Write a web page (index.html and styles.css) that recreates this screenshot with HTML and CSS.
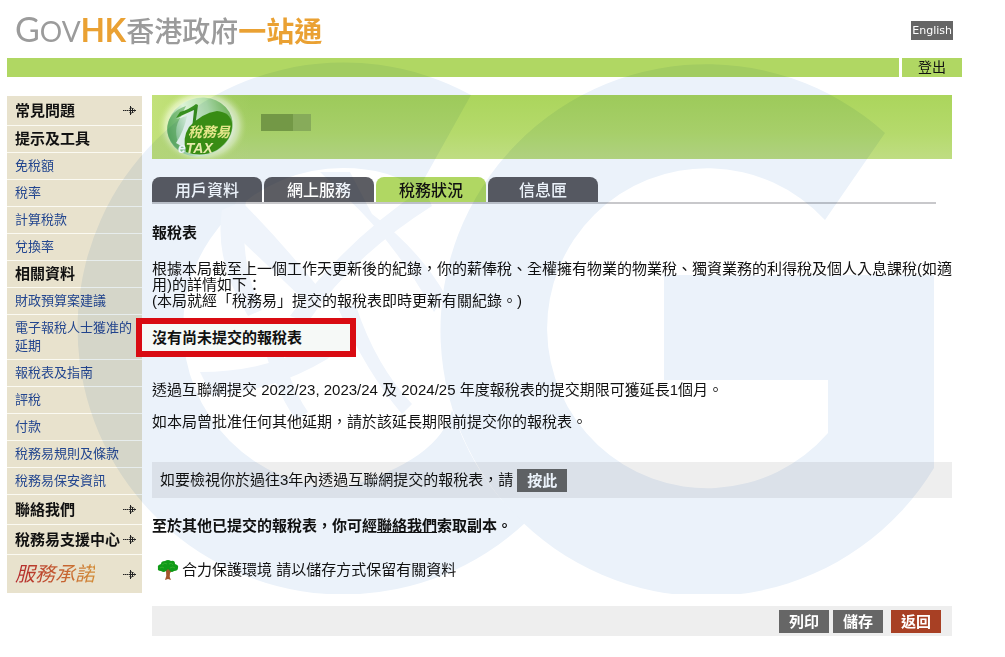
FILE: index.html
```html
<!DOCTYPE html>
<html lang="zh-HK">
<head>
<meta charset="utf-8">
<title>稅務易</title>
<meta name="viewport" content="width=device-width, initial-scale=1">
<link rel="stylesheet" href="styles.css">
</head>
<body>
<svg class="defs" aria-hidden="true">
  <symbol id="arrow" viewBox="0 0 13 11">
    <path d="M0 5h1v1h-1zM2 5h1v1h-1zM4 5h1v1h-1zM6 5h7v1h-7zM7 1h1v9h-1zM9 3h1v5h-1z"/>
    <path opacity="0.5" d="M6 3h5v1h-5zM6 7h5v1h-5zM0 5h6v1h-6zM8 2h1v1h-1zM8 8h1v1h-1zM11 4h1v3h-1z"/>
  </symbol>
</svg>
<div class="page">
  <header class="masthead">
    <a class="brand" href="#"><span class="brand-g">G</span><span class="brand-ov">OV</span><span class="brand-hk">HK</span><span class="brand-zh">香港政府<b>一站通</b></span></a>
    <a class="lang" href="#">English</a>
  </header>
  <div class="topbar">
    <div class="topbar-fill"></div>
    <a class="logout" href="#">登出</a>
  </div>
  <div class="columns">
    <nav class="side">
      <a class="head wide" href="#">常見問題<svg class="arrow"><use href="#arrow"/></svg></a>
      <h2 class="head">提示及工具</h2>
      <a class="link" href="#">免稅額</a>
      <a class="link" href="#">稅率</a>
      <a class="link" href="#">計算稅款</a>
      <a class="link" href="#">兌換率</a>
      <h2 class="head">相關資料</h2>
      <a class="link" href="#">財政預算案建議</a>
      <a class="link" href="#">電子報稅人士獲准的延期</a>
      <a class="link" href="#">報稅表及指南</a>
      <a class="link" href="#">評稅</a>
      <a class="link" href="#">付款</a>
      <a class="link" href="#">稅務易規則及條款</a>
      <a class="link" href="#">稅務易保安資訊</a>
      <a class="head wide" href="#">聯絡我們<svg class="arrow"><use href="#arrow"/></svg></a>
      <a class="head wide" href="#">稅務易支援中心<svg class="arrow"><use href="#arrow"/></svg></a>
      <a class="pledge" href="#"><span>服務承諾</span><svg class="arrow"><use href="#arrow"/></svg></a>
    </nav>
    <main class="content">
      <div class="banner">
        <svg class="etax" viewBox="0 0 100 64" role="img" aria-label="稅務易 eTAX">
          <defs>
            <radialGradient id="glow"><stop offset="0.65" stop-color="#f4fbe4"/><stop offset="0.82" stop-color="#e2f2b8" stop-opacity="0.8"/><stop offset="1" stop-color="#c5e37d" stop-opacity="0"/></radialGradient>
            <linearGradient id="ball" x1="0" y1="0.5" x2="1" y2="0.5"><stop offset="0" stop-color="#6fb97a"/><stop offset="0.35" stop-color="#ddf3d8"/><stop offset="0.7" stop-color="#b4dfa9"/><stop offset="1" stop-color="#79bd5c"/></linearGradient>
          </defs>
          <ellipse cx="50" cy="31" rx="45" ry="38" fill="url(#glow)"/>
          <ellipse cx="48" cy="32" rx="33" ry="29" fill="url(#ball)" transform="rotate(-18 48 32)"/>
          <path d="M16 40C12 24 24 14 34 11L27 25Q20 38 30 57Q20 51 16 40Z" fill="#4ea24a" opacity="0.55"/>
          <path d="M24 24Q36 19 43 12L41 33Q35 40 35 54L24 48Q32 36 35 21Z" fill="#eef9ec"/>
          <path d="M44 9L46 10L43 32L40 34L42 15L24 23L28 17Q38 14 44 9Z" fill="#368f1f"/>
          <path d="M37 32Q50 18 65 16Q78 17 80 28Q81 44 65 55Q50 63 34 57Q30 43 37 32Z" fill="#3c9414"/>
          <text class="etax-zh" x="36" y="42">稅務易</text>
          <text class="etax-en" x="26" y="58"><tspan class="etax-e">e</tspan>TAX</text>
        </svg>
        <div class="masked"></div>
      </div>
      <div class="tabs">
        <a class="tab" href="#">用戶資料</a>
        <a class="tab" href="#">網上服務</a>
        <a class="tab on" href="#">稅務狀況</a>
        <a class="tab" href="#">信息匣</a>
      </div>
      <h1 class="title">報稅表</h1>
      <p class="intro">根據本局截至上一個工作天更新後的紀錄，你的薪俸稅、全權擁有物業的物業稅、獨資業務的利得稅及個人入息課稅(如適用)的詳情如下：<br>(本局就經「稅務易」提交的報稅表即時更新有關紀錄。)</p>
      <div class="flag">沒有尚未提交的報稅表</div>
      <p class="note">透過互聯網提交 2022/23, 2023/24 及 2024/25 年度報稅表的提交期限可獲延長1個月。</p>
      <p class="note">如本局曾批准任何其他延期，請於該延長期限前提交你的報稅表。</p>
      <div class="review">如要檢視你於過往3年內透過互聯網提交的報稅表，請<button class="btn" type="button">按此</button></div>
      <p class="copy">至於其他已提交的報稅表，你可經<a href="#">聯絡我們</a>索取副本。</p>
      <p class="green">
        <svg class="tree" viewBox="0 0 22 22" aria-hidden="true">
          <path d="M9 12L6 10L7 9L10 11L10 8H12L12 11L16 9L17 10L13 14Q12 18 14 21L11 20L8 21Q10 17 9 12Z" fill="#a3562c"/>
          <path d="M4 5Q4 2 8 2Q11 0 14 2Q18 1 18 5Q22 6 21 9Q21 12 17 12Q15 14 13 12L11 10L9 12Q7 14 4 12Q0 12 1 9Q0 6 4 5Z" fill="#109a17"/>
          <path d="M5 6Q8 3 10 5M12 5Q15 3 16 6M3 9Q5 7 7 9M13 9Q16 7 18 9" stroke="#2fae2a" fill="none"/>
        </svg>合力保護環境 請以儲存方式保留有關資料</p>
      <div class="actions">
        <button class="btn" type="button">列印</button>
        <button class="btn" type="button">儲存</button>
        <button class="btn back" type="button">返回</button>
      </div>
    </main>
  </div>
  <svg class="watermark" viewBox="77 62 857 532" aria-hidden="true">
    <path class="mark" d="M471 95A266 266 0 1 0 525 523Q475 480 452 410Q440 460 343 488A160 160 0 0 1 343 168Q390 168 418 190Z"/>
    <path class="mark" d="M885 133A266 266 0 1 0 934 468V275H664V380H828V433A160 160 0 1 1 825 220Z"/>
    <g class="globe">
      <path d="M222 210Q214 262 248 316L262 310Q238 262 246 200Z"/>
      <path d="M320 172L345 196Q395 242 434 312L446 296Q420 250 372 214L350 172Z"/>
      <path d="M424 188Q345 240 290 316L308 322Q350 258 432 206Z"/>
      <path d="M238 198Q280 240 322 292L308 304Q262 260 226 226Z"/>
      <path d="M338 308Q366 372 402 414L412 404Q376 366 356 306Z"/>
      <path d="M200 372Q290 372 352 318L364 332Q300 388 212 396Z"/>
      <path d="M262 336Q272 386 296 420L308 412Q286 380 280 336Z"/>
    </g>
  </svg>
</div>
</body>
</html>
```
FILE: styles.css
```css
* {
  box-sizing: border-box;
}

body {
  margin: 0;
  background: #fff;
  color: #111;
  font: 15px/16px "Liberation Sans", "Noto Sans CJK TC", sans-serif;
}

h1, h2, p {
  margin: 0;
}

a {
  color: inherit;
  text-decoration: none;
}

.defs {
  position: absolute;
  width: 0;
  height: 0;
}

.page {
  position: relative;
  overflow: hidden;
  padding: 0 43px 20px 7px;
}

.masthead {
  display: flex;
  justify-content: space-between;
  align-items: center;
  height: 58px;
  padding: 2px 9px 0 8px;
}

.brand {
  display: flex;
  align-items: baseline;
  color: #9b9b9b;
  font-family: Lato, "Noto Sans CJK TC", sans-serif;
  line-height: 40px;
}

.brand-g {
  font-size: 34px;
}

.brand-ov {
  font-size: 28px;
}

.brand-hk {
  font-family: Roboto, sans-serif;
  font-size: 34px;
  font-weight: 500;
  color: #eaa133;
}

.brand-zh {
  font-family: "Noto Sans CJK TC", sans-serif;
  font-size: 28px;
  font-weight: 500;
}

.brand-zh b {
  color: #eaa133;
}

.lang {
  padding: 0 1px;
  background: #666;
  color: #fff;
  font: 11px/19px "DejaVu Sans", sans-serif;
}

.topbar {
  display: flex;
  gap: 3px;
  height: 19px;
}

.topbar-fill {
  flex: 1;
  background: #b0d763;
}

.logout {
  width: 60px;
  background: #b0d763;
  font-size: 14px;
  line-height: 19px;
  text-align: center;
}

.columns {
  display: flex;
  align-items: flex-start;
  gap: 10px;
  padding: 18px 10px 0 0;
}

.side {
  flex: 0 0 135px;
  margin-top: 1px;
  background: #e8e2cd;
}

.head, .link, .pledge {
  display: flex;
  align-items: center;
  justify-content: space-between;
  border-bottom: 1px solid #fbfaf2;
  padding: 4px 6px 4px 8px;
}

.head {
  font-size: 15px;
  line-height: 18px;
  font-weight: 700;
  white-space: nowrap;
}

.head.wide {
  height: 30px;
}

.link {
  color: #23468f;
  font-size: 13px;
  line-height: 18px;
}

.pledge {
  height: 38px;
  border-bottom: 0;
}

.pledge span {
  background: linear-gradient(90deg, #b3262b, #d28a34);
  background-clip: text;
  color: transparent;
  font-size: 20px;
  line-height: 28px;
  font-style: italic;
}

.arrow {
  flex: none;
  width: 13px;
  height: 11px;
  fill: #222;
}

.content {
  flex: 1;
  min-width: 0;
}

.banner {
  display: flex;
  height: 64px;
  background: linear-gradient(#abd55c, #b5da6c 60%, #bfdd83);
}

.etax {
  width: 100px;
  height: 64px;
  background: linear-gradient(90deg, #c2e17a, #c2e17a00);
}

.etax-zh {
  fill: #f6f28c;
  font-family: "Noto Sans CJK TC", sans-serif;
  font-size: 14px;
  font-style: italic;
  font-weight: 700;
}

.etax-en {
  fill: #fbf8b0;
  font-family: "Liberation Sans", sans-serif;
  font-size: 14px;
  font-style: italic;
  font-weight: 700;
}

.etax-e {
  fill: #fff;
}

.masked {
  width: 50px;
  height: 17px;
  margin: 19px 0 0 9px;
  background: linear-gradient(90deg, #7da047 64%, #93b45c 64%);
}

.tabs {
  display: flex;
  gap: 2px;
  margin: 18px 16px 0 0;
  border-bottom: 2px solid #c8c8cb;
}

.tab {
  width: 110px;
  height: 25px;
  border-radius: 8px 8px 0 0;
  background: #5c5d63;
  color: #fff;
  font-size: 16px;
  line-height: 27px;
  font-weight: 500;
  text-align: center;
}

.tab.on {
  background: #b0d763;
  color: #111;
}

.title {
  margin-top: 21px;
  font-size: 15px;
  line-height: 16px;
}

.intro {
  margin-top: 20px;
}

.flag {
  position: relative;
  z-index: 2;
  width: 220px;
  margin: 9px 0 25px -16px;
  border: 6px solid #d90b12;
  padding: 6px 10px 5px;
  background: #f6f9f7;
  font-weight: 700;
}

.note {
  margin-bottom: 16px;
}

.review {
  display: flex;
  align-items: center;
  gap: 4px;
  min-height: 36px;
  margin-top: 32px;
  padding: 0 8px;
  background: #eee;
}

.btn {
  width: 50px;
  height: 23px;
  border: 0;
  padding: 0;
  background: #666;
  color: #fff;
  font: 700 15px/23px "Liberation Sans", "Noto Sans CJK TC", sans-serif;
}

.copy {
  margin-top: 20px;
  font-weight: 700;
}

.copy a {
  text-decoration: underline;
}

.green {
  display: flex;
  align-items: center;
  gap: 3px;
  margin-top: 25px;
  padding-left: 5px;
}

.tree {
  width: 22px;
  height: 22px;
}

.actions {
  display: flex;
  justify-content: flex-end;
  gap: 4px;
  margin-top: 25px;
  padding: 4px 11px 3px;
  background: #eee;
}

.back {
  margin-left: 4px;
  background: #a84024;
}

.watermark {
  position: absolute;
  top: 62px;
  left: 77px;
  width: 857px;
  height: 532px;
  mix-blend-mode: multiply;
  pointer-events: none;
}

.mark {
  fill: #ebf2fa;
}

.globe {
  fill: #eff4fb;
}
```
